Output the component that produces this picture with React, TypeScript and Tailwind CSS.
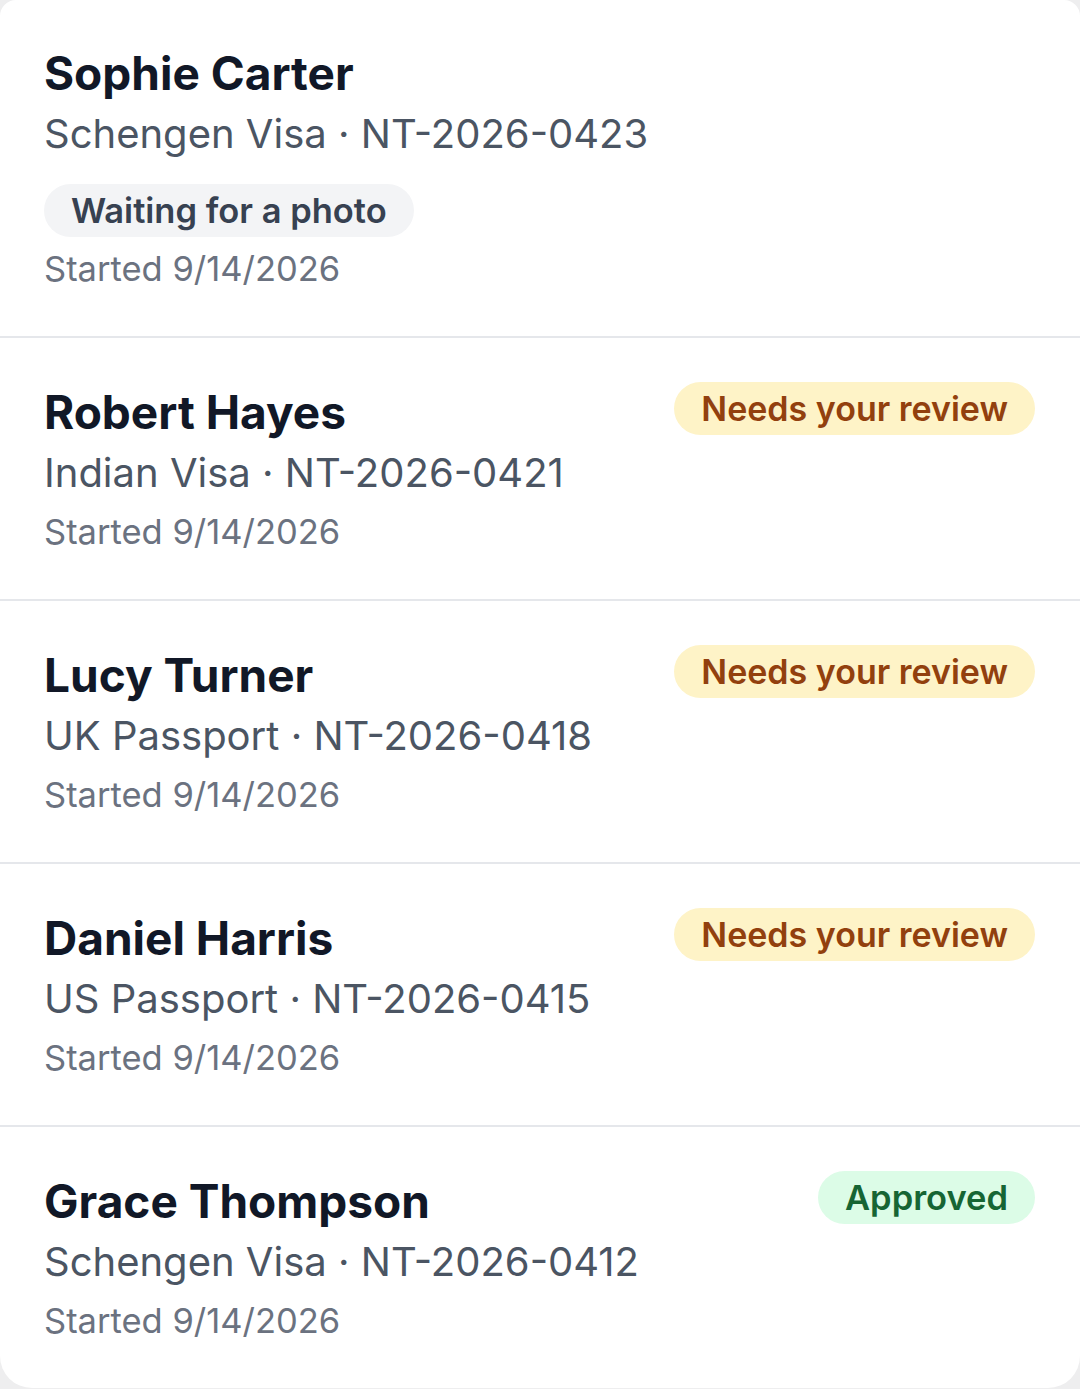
type Status = 'photo' | 'review' | 'approved';

type Application = {
  name: string;
  kind: string;
  ref: string;
  started: string;
  status: Status;
};

const applications: Application[] = [
  { name: 'Sophie Carter', kind: 'Schengen Visa', ref: 'NT-2026-0423', started: '9/14/2026', status: 'photo' },
  { name: 'Robert Hayes', kind: 'Indian Visa', ref: 'NT-2026-0421', started: '9/14/2026', status: 'review' },
  { name: 'Lucy Turner', kind: 'UK Passport', ref: 'NT-2026-0418', started: '9/14/2026', status: 'review' },
  { name: 'Daniel Harris', kind: 'US Passport', ref: 'NT-2026-0415', started: '9/14/2026', status: 'review' },
  { name: 'Grace Thompson', kind: 'Schengen Visa', ref: 'NT-2026-0412', started: '9/14/2026', status: 'approved' },
];

function StatusPill({ status }: { status: Status }) {
  if (status === 'review') {
    return (
      <span className="inline-flex h-[53px] items-center rounded-full bg-[#fef3c7] px-[27px] text-[34px] font-semibold text-[#92400e]">
        Needs your review
      </span>
    );
  }
  if (status === 'approved') {
    return (
      <span className="inline-flex h-[53px] items-center rounded-full bg-[#dcfce7] px-[27px] text-[34.5px] font-semibold text-[#166534]">
        Approved
      </span>
    );
  }
  return (
    <span className="inline-flex h-[53px] items-center rounded-full bg-[#f3f4f6] px-[27px] text-[34.5px] font-semibold text-[#374151]">
      Waiting for a photo
    </span>
  );
}

function Row({ app, first }: { app: Application; first: boolean }) {
  const inline = app.status === 'photo';
  return (
    <div className={first ? 'flex items-start justify-between pl-[44px] pr-[45px] pt-[43px] pb-[39px]' : 'flex items-start justify-between border-t-2 border-[#e5e7eb] pl-[44px] pr-[45px] pt-[44px] pb-[39px]'}>
      <div className="flex min-w-0 flex-col items-start">
        <div className="text-[46px] leading-[60px] font-bold text-[#111827]">{app.name}</div>
        <div className="text-[40px] leading-[62px] text-[#4b5563]">
          {app.kind} · {app.ref}
        </div>
        {inline && (
          <div className="mt-[19px]">
            <StatusPill status={app.status} />
          </div>
        )}
        <div className={inline ? 'mt-[4px] text-[34.5px] leading-[56px] text-[#6b7280]' : 'text-[34.5px] leading-[56px] text-[#6b7280]'}>
          Started {app.started}
        </div>
      </div>
      {!inline && <StatusPill status={app.status} />}
    </div>
  );
}

export default function App() {
  return (
    <div className="min-h-screen w-full bg-[#eeeeef]" style={{ fontFamily: 'Inter, "Noto Sans", sans-serif' }}>
      <div className="overflow-hidden rounded-b-[32px] rounded-t-[16px] bg-white">
        {applications.map((app, i) => (
          <Row key={app.ref} app={app} first={i === 0} />
        ))}
      </div>
    </div>
  );
}
